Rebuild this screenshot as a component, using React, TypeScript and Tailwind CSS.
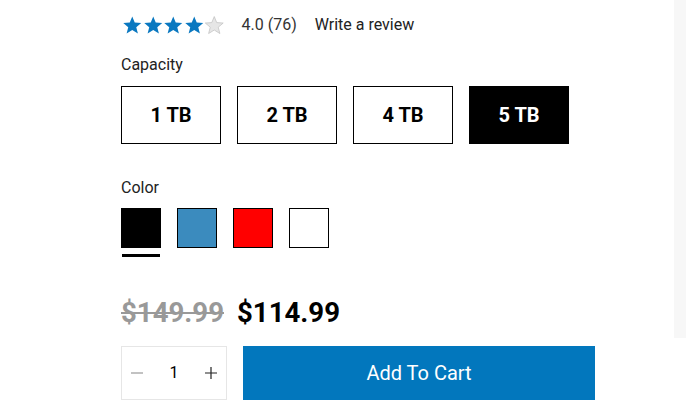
import { useState } from "react";

const capacities = ["1 TB", "2 TB", "4 TB", "5 TB"];
const colors = [
  { name: "Black", swatch: "bg-black" },
  { name: "Blue", swatch: "bg-[#3b8bbe]" },
  { name: "Red", swatch: "bg-[#ff0000]" },
  { name: "White", swatch: "bg-white" },
];

function Star({ filled }: { filled: boolean }) {
  return (
    <svg width="20.5" height="20.5" viewBox="0 0 24 24" className="block">
      <path
        d="M12 1.8l2.9 7.1 7.6.5-5.8 4.9 1.9 7.4L12 17.6l-6.6 4.1 1.9-7.4-5.8-4.9 7.6-.5z"
        fill={filled ? "#0a78c0" : "#e6e6e6"}
        stroke={filled ? "none" : "#bdbdbd"}
        strokeWidth="0.8"
      />
    </svg>
  );
}

export default function App() {
  const [capacity, setCapacity] = useState("5 TB");
  const [color, setColor] = useState("Black");
  const [qty, setQty] = useState(1);

  return (
    <div className="flex h-[420px] w-[686px] bg-white font-['Roboto',sans-serif] text-[#222]">
      <div className="flex-1 pl-[121px] pt-[14px]">
        {/* rating */}
        <div className="flex h-[21px] items-end">
          <div className="ml-px flex">
            {[0, 1, 2, 3, 4].map((i) => (
              <Star key={i} filled={i < 4} />
            ))}
          </div>
          <span className="ml-[17px] text-[16px] leading-[20px] text-[#333]">4.0 (76)</span>
          <a className="ml-[18px] text-[16px] leading-[20px] text-[#222]">Write a review</a>
        </div>

        {/* capacity */}
        <div className="mt-[20px] text-[16px] leading-[20px] text-[#222]">Capacity</div>
        <div className="mt-[11px] flex gap-[16px]">
          {capacities.map((c) => (
            <button
              key={c}
              onClick={() => setCapacity(c)}
              className={
                c === capacity
                  ? "h-[58px] w-[100px] border border-black bg-black text-[20px] font-bold text-white"
                  : "h-[58px] w-[100px] border border-black bg-white text-[20px] font-bold text-black"
              }
            >
              {c}
            </button>
          ))}
        </div>

        {/* color */}
        <div className="mt-[34px] text-[16px] leading-[20px] text-[#222]">Color</div>
        <div className="mt-[10px] flex gap-[16px]">
          {colors.map((c) => (
            <button key={c.name} onClick={() => setColor(c.name)} className="flex flex-col items-center">
              <span className={`block h-[40px] w-[40px] border border-black ${c.swatch}`} />
              <span
                className={
                  c.name === color ? "mt-[6px] block h-[3px] w-[38px] bg-black" : "mt-[6px] block h-[3px] w-[38px]"
                }
              />
            </button>
          ))}
        </div>

        {/* price */}
        <div className="mt-[39px] flex items-baseline gap-[13px] text-[27.6px] font-bold leading-[34px]">
          <span className="text-[#999] line-through decoration-2">$149.99</span>
          <span className="text-black">$114.99</span>
        </div>

        {/* cart */}
        <div className="mt-[16px] flex gap-[16px]">
          <div className="flex h-[54px] w-[106px] items-center justify-between border border-[#e6e6e6] px-[8px]">
            <button onClick={() => setQty(Math.max(1, qty - 1))} className="text-[#999]">
              <svg width="14" height="14" viewBox="0 0 14 14">
                <path d="M1 7h12" stroke="currentColor" strokeWidth="1.2" />
              </svg>
            </button>
            <span className="text-[16px] text-black">{qty}</span>
            <button onClick={() => setQty(qty + 1)} className="text-[#222]">
              <svg width="14" height="14" viewBox="0 0 14 14">
                <path d="M1 7h12M7 1v12" stroke="currentColor" strokeWidth="1.2" />
              </svg>
            </button>
          </div>
          <button className="h-[54px] w-[352px] bg-[#0277bd] text-[20px] text-white">Add To Cart</button>
        </div>
      </div>
      <div className="h-[338px] w-[12px] bg-[#f7f7f7]" />
    </div>
  );
}
